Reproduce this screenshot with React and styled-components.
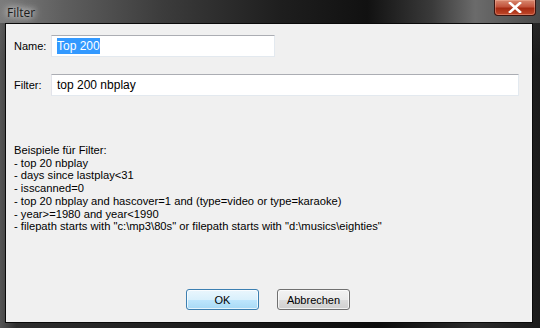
import styled, { createGlobalStyle } from 'styled-components';

const Global = createGlobalStyle`
	html, body {
		margin: 0;
		padding: 0;
		background: #111;
	}
	* {
		box-sizing: border-box;
	}
`;

const examples = [
	'Beispiele für Filter:',
	'- top 20 nbplay',
	'- days since lastplay<31',
	'- isscanned=0',
	'- top 20 nbplay and hascover=1 and (type=video or type=karaoke)',
	'- year>=1980 and year<1990',
	'- filepath starts with "c:\\mp3\\80s" or filepath starts with "d:\\musics\\eighties"',
];

function App() {
	return (
		<>
			<Global />
			<Window>
				<TitleBar>
					<Title>Filter</Title>
					<CloseButton aria-label="close">
						<svg width="14" height="11" viewBox="0 0 14 11">
							<path
								d="M2 1 L12 10 M12 1 L2 10"
								stroke="#fff"
								strokeWidth="2.6"
								strokeLinecap="square"
							/>
						</svg>
					</CloseButton>
				</TitleBar>
				<Client>
					<Row>
						<Label>Name:</Label>
						<TextBox $width={224}>
							<Selected>Top 200</Selected>
						</TextBox>
					</Row>
					<Row $top={17}>
						<Label>Filter:</Label>
						<TextBox $width={468}>top 200 nbplay</TextBox>
					</Row>
					<Help>
						{examples.map((line) => (
							<div key={line}>{line}</div>
						))}
					</Help>
					<Buttons>
						<Button $default>OK</Button>
						<Button>Abbrechen</Button>
					</Buttons>
				</Client>
			</Window>
		</>
	);
}

export default App;

const Window = styled.div`
	width: 540px;
	height: 328px;
	display: flex;
	flex-direction: column;
	padding: 0 7px 5px 5px;
	background:
		linear-gradient(180deg, rgba(255, 255, 255, 0.08) 0, rgba(0, 0, 0, 0) 60px),
		linear-gradient(90deg, #555 0, #2e2e2e 3%, #1b1b1b 40%, #0c0c0c 70%, #2b2b2b 88%, #1a1a1a 100%);
	font-family: 'Liberation Sans', Arial, sans-serif;
`;

const TitleBar = styled.div`
	height: 23px;
	flex: none;
	display: flex;
	align-items: flex-start;
	justify-content: space-between;
	margin: 0 -7px 0 -5px;
	padding: 0 4px 0 7px;
	background: linear-gradient(
		90deg,
		#7c7c7c 0,
		#5e5e5e 12%,
		#3c3c3c 30%,
		#1e1e1e 52%,
		#111 68%,
		#3a3a3a 80%,
		#6b6b6b 88%,
		#4a4a4a 100%
	);
`;

const Title = styled.span`
	margin-top: 4px;
	font-family: 'Open Sans', 'Noto Sans', sans-serif;
	font-size: 12px;
	color: #1a1a1a;
	text-shadow: 0 0 6px #fff, 0 0 10px rgba(255, 255, 255, 0.9);
`;

const CloseButton = styled.div`
	width: 42px;
	height: 16px;
	display: flex;
	align-items: center;
	justify-content: center;
	border: 1px solid #3a1410;
	border-top: none;
	border-radius: 0 0 4px 4px;
	background: linear-gradient(180deg, #d8886f 0, #c2533c 45%, #a52a12 55%, #c0482a 100%);
	box-shadow: inset 0 0 0 1px rgba(255, 200, 180, 0.35);
`;

const Client = styled.div`
	flex: 1;
	display: flex;
	flex-direction: column;
	padding: 11px 12px 12px 8px;
	background: #f0f0f0;
	border: 1px solid #0a0a0a;
	font-family: 'Liberation Sans', Arial, sans-serif;
	font-size: 11px;
	color: #000;
`;

const Row = styled.div`
	display: flex;
	align-items: center;
	margin-top: ${(p) => p.$top || 0}px;
`;

const Label = styled.span`
	width: 37px;
	flex: none;
`;

const TextBox = styled.div`
	width: ${(p) => p.$width}px;
	height: 22px;
	display: flex;
	align-items: center;
	padding-left: 5px;
	background: #fff;
	border: 1px solid #e3e9ef;
	border-top-color: #abadb3;
	border-left-color: #e2e3ea;
	font-size: 12px;
`;

const Selected = styled.span`
	background: #3399ff;
	color: #fff;
	padding: 1px 0;
`;

const Help = styled.div`
	margin-top: 48px;
	font-size: 11.2px;
	line-height: 12.7px;
`;

const Buttons = styled.div`
	margin-top: auto;
	display: flex;
	justify-content: center;
	gap: 18px;
	padding-left: 2px;
`;

const Button = styled.button`
	width: 73px;
	height: 21px;
	padding: 0;
	font-family: 'Liberation Sans', Arial, sans-serif;
	font-size: 11px;
	color: #000;
	border-radius: 3px;
	border: 1px solid ${(p) => (p.$default ? '#3c7fb1' : '#707070')};
	background: ${(p) =>
		p.$default
			? 'linear-gradient(180deg, #eaf6fd 0, #d9f0fc 50%, #bee6fd 51%, #a7d9f5 100%)'
			: 'linear-gradient(180deg, #f2f2f2 0, #ebebeb 50%, #dddddd 51%, #cfcfcf 100%)'};
	box-shadow: inset 0 0 0 1px rgba(255, 255, 255, 0.7);
`;
